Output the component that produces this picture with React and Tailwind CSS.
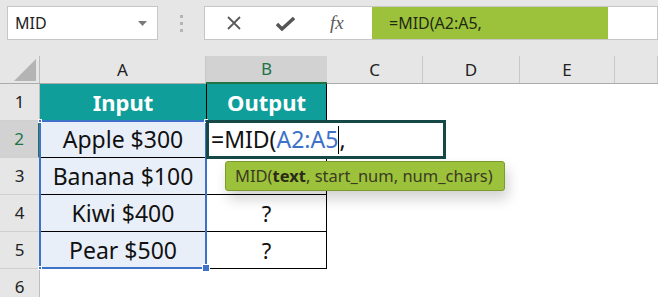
import React from "react";

const font = { fontFamily: '"Noto Sans", "Open Sans", sans-serif' };

const cols = [
  { id: "A", w: "w-[166px]" },
  { id: "B", w: "w-[121px]" },
  { id: "C", w: "w-[96px]" },
  { id: "D", w: "w-[97px]" },
  { id: "E", w: "w-[95px]" },
  { id: "", w: "flex-1" },
];

const data = [
  ["Apple $300", ""],
  ["Banana $100", ""],
  ["Kiwi $400", "?"],
  ["Pear $500", "?"],
];

function Toolbar() {
  return (
    <div className="flex items-start h-[56px] bg-[#e6e6e6] pt-[6px]">
      <div className="ml-[7px] w-[151px] h-[34px] bg-white border border-[#c6c6c6] flex items-center justify-between pl-[7px] pr-[10px]">
        <span className="text-[16px] text-[#222]">MID</span>
        <svg width="9" height="5" viewBox="0 0 9 5">
          <path d="M0 0h9L4.5 5z" fill="#7a7a7a" />
        </svg>
      </div>
      <div className="w-[46px] h-[34px] flex flex-col items-center justify-center gap-[4px]">
        <div className="w-[3px] h-[3px] bg-[#b4b4b4]" />
        <div className="w-[3px] h-[3px] bg-[#b4b4b4]" />
        <div className="w-[3px] h-[3px] bg-[#b4b4b4]" />
      </div>
      <div className="flex-1 h-[34px] bg-white border border-[#c6c6c6] flex items-stretch">
        <div className="w-[167px] flex items-center">
          <svg className="ml-[21px]" width="16" height="16" viewBox="0 0 16 16">
            <path d="M2 2l12 12M14 2L2 14" stroke="#5a5a5a" strokeWidth="1.8" />
          </svg>
          <svg className="ml-[34px]" width="19" height="15" viewBox="0 0 19 15">
            <path d="M1 8l5 5L18 2" stroke="#555" strokeWidth="3.4" fill="none" />
          </svg>
          <span
            className="ml-[35px] text-[19px] italic text-[#5a5a5a]"
            style={{ fontFamily: '"Liberation Serif", "DejaVu Serif", serif' }}
          >
            fx
          </span>
        </div>
        <div className="w-[236px] bg-[#9cc23c] flex items-center pl-[17px] text-[16px] text-[#1f2a10]">
          =MID(A2:A5,
        </div>
      </div>
    </div>
  );
}

function ColumnHeaders() {
  return (
    <div className="flex h-[28px] bg-[#e6e6e6] border-b border-[#ababab]">
      <div className="w-[40px] relative border-r border-[#bdbdbd] flex items-end justify-end pr-[3px] pb-[2px]">
        <svg width="22" height="22" viewBox="0 0 22 22">
          <path d="M22 0V22H0z" fill="#b4b4b4" />
        </svg>
      </div>
      {cols.map((c, i) => (
        <div
          key={i}
          className={`${c.w} flex items-center justify-center text-[17px] ${
            c.id === "B"
              ? "bg-[#d2d2d2] text-[#217346] border-b-2 border-[#217346] -mb-px"
              : "text-[#222] border-r border-[#c8c8c8]"
          }`}
        >
          {c.id}
        </div>
      ))}
    </div>
  );
}

function RowHeader({ n, active }) {
  return (
    <div
      className={`w-[40px] h-[37px] flex items-center justify-center text-[17px] border-b border-[#d0d0d0] ${
        active
          ? "bg-[#d2d2d2] text-[#217346] border-r-2 border-r-[#217346]"
          : "bg-[#e6e6e6] text-[#222] border-r border-r-[#bdbdbd]"
      }`}
    >
      {n}
    </div>
  );
}

export default function App() {
  return (
    <div className="w-[658px] h-[297px] overflow-hidden bg-white relative" style={font}>
      <Toolbar />
      <ColumnHeaders />

      {/* row 1 */}
      <div className="flex">
        <RowHeader n={1} />
        <div className="w-[166px] h-[37px] bg-[#0f9e99] flex items-center justify-center text-white font-bold text-[22px]">
          Input
        </div>
        <div className="w-[121px] h-[37px] bg-[#0f9e99] border-l border-r border-black flex items-center justify-center text-white font-bold text-[22px]">
          Output
        </div>
      </div>

      {data.map((r, i) => (
        <div key={i} className="flex">
          <RowHeader n={i + 2} active={i === 0} />
          <div className="w-[166px] h-[37px] bg-[#e9eff9] border-b border-black flex items-center justify-center text-[23px] text-[#111]">
            {r[0]}
          </div>
          <div className="w-[121px] h-[37px] border-l border-r border-b border-black flex items-center justify-center text-[22px] text-[#111]">
            {r[1]}
          </div>
        </div>
      ))}

      <div className="flex">
        <RowHeader n={6} />
      </div>

      {/* A2:A5 range selection */}
      <div className="absolute left-[39px] top-[120px] w-[168px] h-[149px] border-2 border-[#3d72c8] pointer-events-none">
        <div className="absolute -left-[3px] -top-[3px] w-[4px] h-[4px] bg-[#3d72c8] border border-white" />
        <div className="absolute -right-[3px] -top-[3px] w-[4px] h-[4px] bg-[#3d72c8] border border-white" />
        <div className="absolute -left-[3px] -bottom-[3px] w-[4px] h-[4px] bg-[#3d72c8] border border-white" />
        <div className="absolute -right-[5px] -bottom-[5px] w-[8px] h-[8px] bg-[#3d72c8] border border-white" />
      </div>

      {/* editing cell B2 */}
      <div className="absolute left-[206px] top-[120px] w-[240px] h-[39px] bg-white border-[3px] border-[#174848] flex items-center pl-[2px] text-[23px] text-[#111]">
        <span>=MID(</span>
        <span className="text-[#3d72c8]">A2:A5</span>
        <span className="w-px h-[28px] bg-black" />
        <span>,</span>
      </div>

      {/* function tooltip */}
      <div className="absolute left-[225px] top-[161px] w-[280px] h-[30px] bg-[#9cc23c] border border-[#7c9b2e] rounded-[3px] shadow-[3px_8px_14px_rgba(0,0,0,0.18)] flex items-center pl-[9px] text-[16.5px] text-[#3b3b22]">
        MID(<b className="text-[#2a2a18]">text</b>, start_num, num_chars)
      </div>
    </div>
  );
}
